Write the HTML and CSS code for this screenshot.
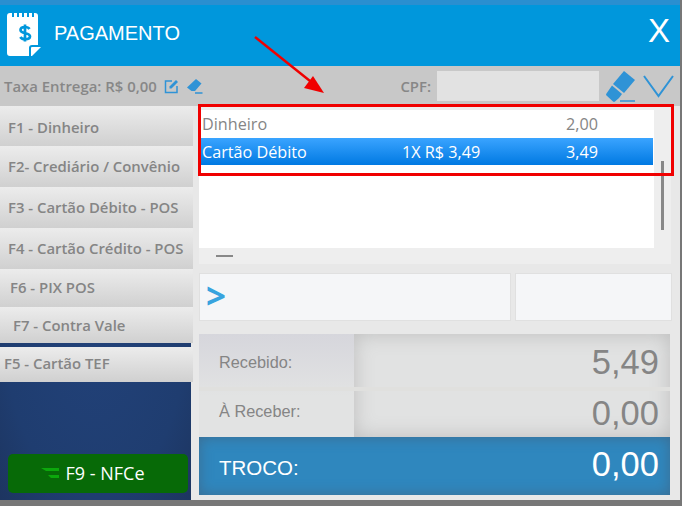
FILE: index.html
```html
<!DOCTYPE html>
<html>
<head>
<meta charset="utf-8">
<title>Pagamento</title>
<link rel="stylesheet" href="styles.css">
</head>
<body>

<div class="app">

    <div class="header">
        <svg class="logo" viewBox="0 0 34 46" width="34" height="46">
            <path d="M3 3h2v4h2V3h3v4h2V3h3v4h2V3h3v4h2V3h3v4h2V3h1a3 3 0 0 1 3 3v29H25a3 3 0 0 0-3 3v8H3a3 3 0 0 1-3-3V6a3 3 0 0 1 3-3z" fill="#fff"/>
            <path d="M25 37h9l-9 9a2 2 0 0 1-1 0v-8a1 1 0 0 1 1-1z" fill="#fff"/>
            <path d="M22.500 19c-.8-1.300-2.300-2-4.500-2-2.500 0-4.500 1-4.500 3 0 4.200 9.500 2.200 9.500 6.200 0 2-2 3-4.700 3-2.300 0-4-.8-5-2.300M18 14.500v17" fill="none" stroke="#0097dc" stroke-width="2.700"/>
        </svg>
        <span class="title">PAGAMENTO</span>
        <span class="close">X</span>
    </div>

    <div class="toolbar">
        <span class="taxa">Taxa Entrega: R$ 0,00</span>
        <svg class="edit-icon" viewBox="0 0 15 15" width="15" height="15">
            <path d="M8 2H1.500v11.500H13V7" fill="none" stroke="#2f93d6" stroke-width="1.500"/>
            <path d="M5.500 9.500v-2L12 1l2 2-6.500 6.500z" fill="#2f93d6"/>
        </svg>
        <svg class="eraser-small" viewBox="0 0 17 15" width="17" height="15">
            <path d="M10 0l5.500 4.500-6.500 7.500H5.500L1 8.500z" fill="#2f93d6"/>
            <path d="M9 14h7.500" stroke="#2f93d6" stroke-width="1.500"/>
        </svg>
        <div class="cpf">
            <span class="cpf-label">CPF:</span>
            <div class="cpf-input"></div>
            <svg class="eraser-big" viewBox="0 0 30 31" width="30" height="31">
                <path d="M18 0l11 9-11 13-11-9z" fill="#2f93d6"/>
                <path d="M6 14.500l10 8.500-3 4-4 3.500a1.500 1.500 0 0 1-2 0L.500 24.500a1.500 1.500 0 0 1 0-2z" fill="#2f93d6"/>
                <path d="M14 30h15" stroke="#2f93d6" stroke-width="1.500"/>
            </svg>
            <svg class="chevron" viewBox="0 0 31 23" width="31" height="23">
                <path d="M1 1l14.500 20L30 1" fill="none" stroke="#2f93d6" stroke-width="2"/>
            </svg>
        </div>
    </div>

    <div class="main">

        <div class="sidebar">
            <div class="btn h40">F1 - Dinheiro</div>
            <div class="btn h41">F2- Crediário / Convênio</div>
            <div class="btn h41">F3 - Cartão Débito - POS</div>
            <div class="btn h41">F4 - Cartão Crédito - POS</div>
            <div class="btn h38 in10">F6 - PIX POS</div>
            <div class="btn h36 in13">F7 - Contra Vale</div>
            <div class="btn h35 in4 tef">F5 - Cartão TEF</div>
            <div class="nfce">
                <svg viewBox="0 0 18 12" width="18" height="12">
                    <path d="M0 1h18v3H5zM7 8h11v3H10z" fill="#0ca80c"/>
                </svg>
                F9 - NFCe
            </div>
        </div>

        <div class="content">

            <div class="listbox">
                <div class="list">
                    <div class="item">
                        <span class="c1">Dinheiro</span>
                        <span class="c2"></span>
                        <span class="c3">2,00</span>
                    </div>
                    <div class="item selected">
                        <span class="c1">Cartão Débito</span>
                        <span class="c2">1X R$ 3,49</span>
                        <span class="c3">3,49</span>
                    </div>
                </div>
                <div class="thumb-v"></div>
                <div class="thumb-h"></div>
            </div>

            <div class="inputs">
                <div class="field wide">&gt;</div>
                <div class="field"></div>
            </div>

            <div class="totals">
                <div class="total-grid">
                    <div class="total-labels">
                        <div class="cell first"><span class="lift-label">Recebido:</span></div>
                        <div class="cell second"><span class="lift-label">À Receber:</span></div>
                    </div>
                    <div class="total-values">
                        <div class="cell first">5,49</div>
                        <div class="cell second">0,00</div>
                    </div>
                </div>
                <div class="troco">
                    <span class="troco-label">TROCO:</span>
                    <span class="troco-value">0,00</span>
                </div>
            </div>

        </div>
    </div>

    <!-- marcacao em vermelho por cima da tela -->
    <div class="redbox"></div>
    <svg class="redarrow" viewBox="0 0 80 65" width="80" height="65">
        <path d="M2 2l60 48" stroke="#f00000" stroke-width="2.500"/>
        <path d="M71 58l-20-5 9-12z" fill="#f00000"/>
    </svg>
</div>

</body>
</html>
```

FILE: styles.css
```css
html, body {
    margin: 0;
    padding: 0;
    background-color: #fff;
}

.app {
    position: relative;
    width: 680px;
    height: 500px;
    border-right: 2px solid #777;
    border-bottom: 6px solid #777;
    display: flex;
    flex-direction: column;
    overflow: hidden;
    background-color: #e8e8e8;
}

.header {
    height: 61px;
    border-top: 5px solid #2a8fd0;
    background-color: #0097dc;
    display: flex;
    align-items: center;
    color: #fff;
    font-family: "Liberation Sans", sans-serif;
}

.logo {
    margin-left: 7px;
    margin-top: -5px;
}

.title {
    margin-left: 13px;
    margin-top: -4px;
    font-size: 20px;
}

.close {
    margin-left: auto;
    margin-right: 10px;
    margin-top: -9px;
    font-size: 33px;
}

.toolbar {
    height: 40px;
    flex: none;
    background-color: #c8c8c8;
    display: flex;
    align-items: center;
    font-family: "Open Sans", sans-serif;
    font-weight: 600;
    font-size: 14.9px;
    color: #878787;
}

.taxa {
    margin-left: 4px;
    white-space: nowrap;
}

.edit-icon {
    margin-left: 7px;
}

.eraser-small {
    margin-left: 7px;
}

.cpf {
    margin-left: auto;
    display: flex;
    align-items: center;
}

.cpf-input {
    width: 162px;
    height: 30px;
    margin-left: 6px;
    background-color: #e2e2e2;
}

.eraser-big {
    margin-left: 7px;
}

.chevron {
    margin-left: 7px;
    margin-right: 6px;
}

.main {
    flex: 1;
    display: flex;
    min-height: 0;
}

.sidebar {
    width: 191px;
    flex: none;
    display: flex;
    flex-direction: column;
    background: radial-gradient(ellipse at center, #22427a 0%, #1f3d70 70%, #1d3560 100%);
}

.btn {
    width: 193px;
    box-sizing: border-box;
    padding-left: 8px;
    display: flex;
    align-items: center;
    background: linear-gradient(#ececec, #d0d0d0);
    font-family: "Open Sans", sans-serif;
    font-weight: 600;
    font-size: 14.9px;
    color: #858585;
    white-space: nowrap;
}

.h40 { height: 40px; padding-top: 2px; }
.h41 { height: 41px; padding-bottom: 2px; }
.h38 { height: 38px; padding-bottom: 2px; }
.h36 { height: 36px; }
.h35 { height: 35px; padding-bottom: 3px; }
.in10 { padding-left: 10px; }
.in13 { padding-left: 13px; }
.in4 { padding-left: 4px; }

.tef {
    margin-top: 4px;
}

.nfce {
    width: 180px;
    height: 39px;
    box-sizing: border-box;
    padding: 0 10px 2px 0;
    margin: 72px 0 0 8px;
    border-radius: 5px;
    background-color: #076a07;
    color: #fff;
    font-family: "Open Sans", sans-serif;
    font-size: 18px;
    display: flex;
    align-items: center;
    justify-content: center;
    gap: 6px;
}

.content {
    flex: 1;
    padding-left: 8px;
    display: flex;
    flex-direction: column;
    min-width: 0;
}

.listbox {
    position: relative;
    width: 472px;
    height: 158px;
    box-sizing: border-box;
    padding-top: 4px;
    background-color: #eee;
}

.list {
    width: 455px;
    height: 138px;
    box-sizing: border-box;
    background-color: #fff;
    font-family: "Open Sans", sans-serif;
    font-size: 16.2px;
    color: #858585;
}

.item {
    height: 27px;
    margin-bottom: 1px;
    display: flex;
    align-items: center;
    padding-left: 3px;
}

.item.selected {
    width: 452px;
    margin-left: 2px;
    padding-left: 1px;
    box-sizing: border-box;
    background: linear-gradient(#3aa4ff, #0079e2);
    color: #fff;
}

.c1 {
    width: 200px;
}

.c2 {
    width: 164px;
}

.thumb-v {
    position: absolute;
    left: 462px;
    top: 55px;
    width: 3px;
    height: 69px;
    background-color: #888;
}

.thumb-h {
    position: absolute;
    left: 17px;
    top: 149px;
    width: 17px;
    height: 2px;
    background-color: #888;
}

.inputs {
    display: flex;
    gap: 4px;
    margin-top: 9px;
}

.field {
    box-sizing: border-box;
    width: 157px;
    height: 48px;
    border: 1px solid #e0e0e0;
    background-color: #f5f6f8;
}

.field.wide {
    width: 312px;
    padding-left: 6px;
    font-family: "Open Sans", sans-serif;
    font-size: 35px;
    font-weight: 700;
    line-height: 43px;
    color: #38a3de;
}

.totals {
    width: 471px;
    height: 161px;
    margin-top: 13px;
    display: flex;
    flex-direction: column;
}

.total-grid {
    display: flex;
    height: 103px;
    font-family: "Liberation Sans", sans-serif;
    color: #858585;
}

.total-labels {
    width: 155px;
    background: linear-gradient(#d6d6dc, #e2e3e3 60%);
    font-size: 16.300px;
}

.total-values {
    flex: 1;
    background-color: #e1e2e2;
    box-shadow: inset 0 0 20px #bdbdbd;
    font-size: 34.500px;
}

.cell {
    box-sizing: border-box;
    display: flex;
    align-items: center;
}

.cell.first {
    height: 57px;
    border-bottom: 4px solid #e0e0de;
    padding-top: 3px;
}

.cell.second {
    height: 46px;
    padding-bottom: 2px;
}

.total-labels .cell {
    padding-left: 20px;
}

.total-values .cell {
    justify-content: flex-end;
    padding-right: 11px;
}

.total-labels .cell.second .lift-label {
    margin-bottom: 3px;
}

.troco {
    height: 58px;
    box-sizing: border-box;
    padding: 0 11px 0 20px;
    display: flex;
    align-items: center;
    justify-content: space-between;
    background-color: #2f87be;
    box-shadow: inset 0 0 14px #3d6c90;
    color: #fff;
    font-family: "Liberation Sans", sans-serif;
}

.troco-label {
    font-size: 20.500px;
    margin-top: 3px;
}

.troco-value {
    font-size: 34.500px;
    margin-top: -3px;
}

.redbox {
    position: absolute;
    left: 198px;
    top: 104px;
    width: 470px;
    height: 66px;
    border: 3px solid #f00000;
}

.redarrow {
    position: absolute;
    left: 253px;
    top: 35px;
}
```
